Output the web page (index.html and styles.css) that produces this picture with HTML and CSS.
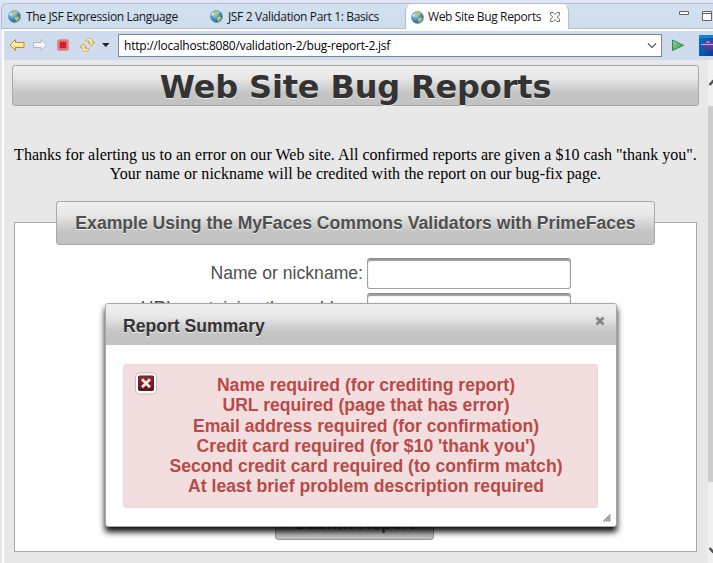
FILE: index.html
```
<!DOCTYPE html>
<html lang="en">
<head>
<meta charset="utf-8">
<title>Web Site Bug Reports</title>
<link rel="stylesheet" href="styles.css">
</head>
<body>
<svg width="0" height="0" class="defs">
  <defs>
    <radialGradient id="sea" cx=".35" cy=".3" r=".75"><stop offset="0" stop-color="#b9dcf0"/><stop offset=".5" stop-color="#4d96c0"/><stop offset="1" stop-color="#215b88"/></radialGradient>
    <linearGradient id="gold" x2="0" y2="1"><stop offset="0" stop-color="#fffbd8"/><stop offset="1" stop-color="#ffd777"/></linearGradient>
    <linearGradient id="play" x2="1" y2="1"><stop offset="0" stop-color="#92d09b"/><stop offset="1" stop-color="#3c9e50"/></linearGradient>
    <linearGradient id="blue" x2="1" y2="1"><stop offset="0" stop-color="#0873d4"/><stop offset="1" stop-color="#0c3d96"/></linearGradient>
    <linearGradient id="maroon" x2="0" y2="1"><stop offset="0" stop-color="#992b37"/><stop offset="1" stop-color="#6c0c18"/></linearGradient>
    <symbol id="globe" viewBox="0 0 13 13"><circle cx="6.5" cy="6.5" r="6" fill="url(#sea)" stroke="#6e98b3" stroke-width=".7"/><path d="M5 1.200L8 1l2 1.500-1 1.200L7.500 4 7 5.800 5 5.500 4 4zM7 7l3-.5 1.500 1L10 10.300 8 11.500 7.200 9z" fill="#b5c36e"/><path d="M1.500 4L4 2 3.500 5 2 6z" fill="#d9edf5"/></symbol>
  </defs>
</svg>
<div class="window">
  <div class="tabs">
    <div class="tab tab-first"><svg class="globe"><use href="#globe"/></svg><span class="t1">The JSF Expression Language</span></div>
    <div class="tab tab-second"><svg class="globe"><use href="#globe"/></svg><span class="t2">JSF 2 Validation Part 1: Basics</span></div>
    <div class="tab tab-active"><svg class="globe"><use href="#globe"/></svg><span class="t3">Web Site Bug Reports</span>
      <svg class="close" width="12" height="12" viewBox="0 0 12 12"><path d="M1.500 1.500h2.500l2 2 2-2h2.500v2.200L8.300 6l2.200 2.300v2.200H8l-2-2-2 2H1.500V8.300L3.700 6 1.500 3.700z" fill="#fff" stroke="#6b6b6b"/></svg>
    </div>
    <svg class="controls" width="34" height="24" viewBox="0 0 34 24"><g fill="#fff" stroke="#646464"><path d="M.5 7.500h9v3h-9zM23.500 7.500h9v9h-9z"/><path d="M23.500 9.500h9"/></g></svg>
  </div>
  <div class="toolbar">
    <svg class="tools" width="110" height="29" viewBox="0 0 110 29">
      <path d="M6 14l5.500-5.500v3H20v5h-8.500v3z" fill="url(#gold)" stroke="#c08a27" stroke-linejoin="round"/>
      <path d="M42.500 14L37 8.500v3h-7.500v5H37v3z" fill="#f4f5f6" stroke="#b5b8bd" stroke-linejoin="round"/>
      <rect x="54" y="9" width="10" height="10" rx="1" fill="#f6b3b5" stroke="#d14850"/><rect x="56" y="11" width="6" height="6" fill="#de1d2b" stroke="#c51825"/>
      <g fill="url(#gold)" stroke="#c79132" stroke-width=".8" stroke-linejoin="round">
        <path id="turn" d="M81.500 9.500c1.500-2.500 4.500-3 6.300-.8.700.8.900 2 .9 2.800h1.600l-3 3.200-3.300-3.200h1.700c0-1.800-1.200-2.400-2.200-1.200z"/>
        <use href="#turn" transform="rotate(180 83.300 13.800)"/>
      </g>
      <path d="M98 12h7.500L101.800 16z" fill="#1d1d1d"/>
    </svg>
    <div class="address"><span>http://localhost:8080/validation-2/bug-report-2.jsf</span>
      <svg width="10" height="7" viewBox="0 0 10 7"><path d="M1 1.500l4 4 4-4" fill="none" stroke="#555" stroke-width="1.200"/></svg>
    </div>
    <svg class="go" width="42" height="29" viewBox="0 0 42 29"><path d="M1.500 9v10.500l11-5.200z" fill="url(#play)" stroke="#338a47"/><path d="M28 4h14v21H28z" fill="url(#blue)"/><path d="M28 4h14v3H28z" fill="#1284dc"/><circle cx="38" cy="14" r="5.500" fill="#563d94"/><path d="M30 13.500h12" stroke="#c1a1ee" stroke-width="1.200"/><ellipse cx="37" cy="11" rx="2" ry="1" fill="#a182d4"/></svg>
  </div>
  <div class="view">
    <main class="page">
      <h1><span>Web Site Bug Reports</span></h1>
      <p class="intro">Thanks for alerting us to an error on our Web site. All confirmed reports are given a $10 cash "thank you".<br>Your name or nickname will be credited with the report on our bug-fix page.</p>
      <section class="panel">
        <h2>Example Using the MyFaces Commons Validators with PrimeFaces</h2>
        <div class="row"><label for="name">Name or nickname:</label><input id="name" type="text"></div>
        <div class="row"><label for="url">URL containing the problem:</label><input id="url" type="text"></div>
        <button type="button">Submit Report</button>
      </section>
    </main>
    <div class="scrollbar">
      <svg width="5" height="40" viewBox="0 0 5 40"><path d="M1.500 25l4-4.500" stroke="#505050" stroke-width="2.500" fill="none"/></svg>
      <div class="thumb"></div>
      <svg width="5" height="81" viewBox="0 0 5 81"><path d="M1.500 66l4 4.500" stroke="#505050" stroke-width="2.500" fill="none"/></svg>
    </div>
  </div>
</div>
<div class="dialog">
  <header><span>Report Summary</span><svg width="10" height="10" viewBox="0 0 10 10"><path d="M1.500 1.500l7 7m0-7l-7 7" stroke="#858585" stroke-width="2.800"/></svg></header>
  <div class="messages">
    <svg width="22" height="24" viewBox="0 0 22 24"><rect x=".5" y="1" width="21" height="21" rx="4" fill="#fff" stroke="#c9bcbc"/><rect x="3.500" y="4" width="15" height="14.500" rx="1" fill="url(#maroon)" stroke="#4b242a"/><path d="M7 7.300l8 8m0-8l-8 8" stroke="#eee8e5" stroke-width="2.800"/></svg>
    <ul>
      <li>Name required (for crediting report)</li>
      <li>URL required (page that has error)</li>
      <li>Email address required (for confirmation)</li>
      <li>Credit card required (for $10 'thank you')</li>
      <li>Second credit card required (to confirm match)</li>
      <li>At least brief problem description required</li>
    </ul>
  </div>
  <svg class="grip" width="8" height="8" viewBox="0 0 8 8"><path d="M.5 7.500l7-7M3 7.500L7.500 3M5.500 7.500l2-2" stroke="#888" stroke-width="1.300"/></svg>
</div>
</body>
</html>
```
FILE: styles.css
```
* { box-sizing: border-box; }
body {
  margin: 0;
  width: 713px;
  height: 563px;
  overflow: hidden;
  position: relative;
  background: #dfe5f3;
  font-family: "Liberation Sans", Arial, sans-serif;
}
svg { display: block; flex: none; }
.defs { position: absolute; }
.window {
  height: 563px;
  padding-top: 3px;
  margin-left: 1px;
  display: flex;
  flex-direction: column;
}
.tabs {
  height: 26px;
  flex: none;
  display: flex;
  background: linear-gradient(#d3e1ef, #cddded);
  border: 1px solid #b5bdd0;
  border-right: 0;
  border-radius: 6px 0 0 0;
  font: 12px/24px "Open Sans", sans-serif;
  color: #151515;
}
.tab { display: flex; align-items: center; height: 25px; white-space: nowrap; }
.globe { width: 13px; height: 13px; margin-right: 5px; }
.tab-first { width: 202px; padding-left: 6px; }
.tab-second { width: 201px; padding-left: 6px; }
.tab-active {
  width: 164px;
  padding-left: 5px;
  background: #fff;
  border: 1px solid #b5bdd0;
  border-top-color: #fff;
  border-bottom: 0;
  border-radius: 7px 7px 0 0;
}
.tab-active .globe { margin-right: 4px; }
.t1 { letter-spacing: -.34px; }
.t2 { letter-spacing: -.36px; }
.t3 { letter-spacing: -.36px; }
.close { margin-left: 8px; }
.controls { margin-left: auto; }
.toolbar {
  height: 31px;
  flex: none;
  margin-left: 1px;
  border-left: 2px solid #fff;
  border-top: 2px solid #fff;
  background: #cfdced;
  display: flex;
}
.address {
  width: 545px;
  height: 23px;
  margin: 3px 0 0 4px;
  padding: 0 4px 0 5px;
  background: #fff;
  border: 1px solid #7d8590;
  display: flex;
  align-items: center;
  justify-content: space-between;
  font: 12px/20px "Open Sans", sans-serif;
  letter-spacing: -.22px;
  color: #000;
}
.go { margin-left: 9px; }
.view {
  flex: 1;
  min-height: 0;
  margin-left: 1px;
  border-left: 2px solid #fff;
  background: #e8e8e8;
  display: flex;
}
.page { width: 704px; padding: 5px 11px 0 8px; }
h1, h2, button, .dialog header {
  background: linear-gradient(#efefef 0%, #e8e8e8 30%, #c5c5c5 68%, #c2c2c2 100%);
}
h1 {
  width: 687px;
  height: 41px;
  margin: 0;
  border: 1px solid #a8a8a8;
  border-radius: 3px;
  font: bold 32px/43px "DejaVu Sans", Verdana, sans-serif;
  letter-spacing: -.15px;
  text-align: center;
  color: #333;
  text-shadow: 0 1px 0 rgba(255,255,255,.7);
  white-space: nowrap;
}
.intro {
  width: 687px;
  margin: 39px 0 0;
  font: 16px/19px "Liberation Serif", "Times New Roman", serif;
  letter-spacing: .02px;
  color: #000;
  text-align: center;
  white-space: nowrap;
}
.panel {
  width: 683px;
  height: 330px;
  margin: 39px 0 0 2px;
  border: 1px solid #a8a8a8;
  background: #fff;
  display: flex;
  flex-direction: column;
}
h2 {
  width: 599px;
  height: 44px;
  flex: none;
  margin: -22px 0 13px 41px;
  border: 1px solid #a8a8a8;
  border-radius: 3px;
  font: bold 17.6px/42px "Liberation Sans", Arial, sans-serif;
  text-align: center;
  color: #4f4f4f;
  text-shadow: 0 1px 0 rgba(255,255,255,.7);
  white-space: nowrap;
}
.row { display: flex; height: 35px; flex: none; font-size: 17.6px; line-height: 30px; color: #4f4f4f; }
label { width: 348px; margin-right: 4px; text-align: right; }
input {
  width: 204px;
  height: 31px;
  border: 1px solid #a0a0a0;
  border-top-color: #8d8d8d;
  border-radius: 3px;
  background: #fff;
  box-shadow: inset 0 2px 1px #999;
}
button {
  width: 159px;
  height: 38px;
  margin: auto 0 11px 260px;
  padding: 4px 0 0;
  flex: none;
  border: 1px solid #999;
  border-radius: 3px;
  font: bold 17.6px/30px "Liberation Sans", Arial, sans-serif;
  color: #4f4f4f;
}
.scrollbar { width: 6px; background: #f0f0f0; }
.thumb { height: 376px; background: #cdcdcd; margin-top: 6px; }
.dialog {
  position: absolute;
  left: 105px;
  top: 303px;
  width: 512px;
  height: 224px;
  background: #fff;
  border: 1px solid #a8a8a8;
  border-radius: 3px;
  box-shadow: 0 5px 6px rgba(0,0,0,.95);
}
.dialog header {
  height: 41px;
  padding: 0 11px 0 17px;
  border-radius: 2px 2px 0 0;
  display: flex;
  justify-content: space-between;
  font: bold 17.6px/44px "Liberation Sans", Arial, sans-serif;
  color: #333;
  text-shadow: 0 1px 0 rgba(255,255,255,.7);
}
.dialog header svg { margin-top: 12px; }
.messages {
  width: 475px;
  height: 144px;
  margin: 19px 0 0 17px;
  padding: 7px 0 0 11px;
  background: #f2dede;
  border: 1px solid #eed3d7;
  border-radius: 3px;
  display: flex;
  color: #b94a48;
}
.messages ul {
  width: 418px;
  margin: 3px 0 0;
  padding: 0;
  list-style: none;
  font-weight: bold;
  font-size: 17.6px;
  line-height: 20.3px;
  text-align: center;
  white-space: nowrap;
}
.grip { position: absolute; right: 5px; bottom: 4px; }
```
